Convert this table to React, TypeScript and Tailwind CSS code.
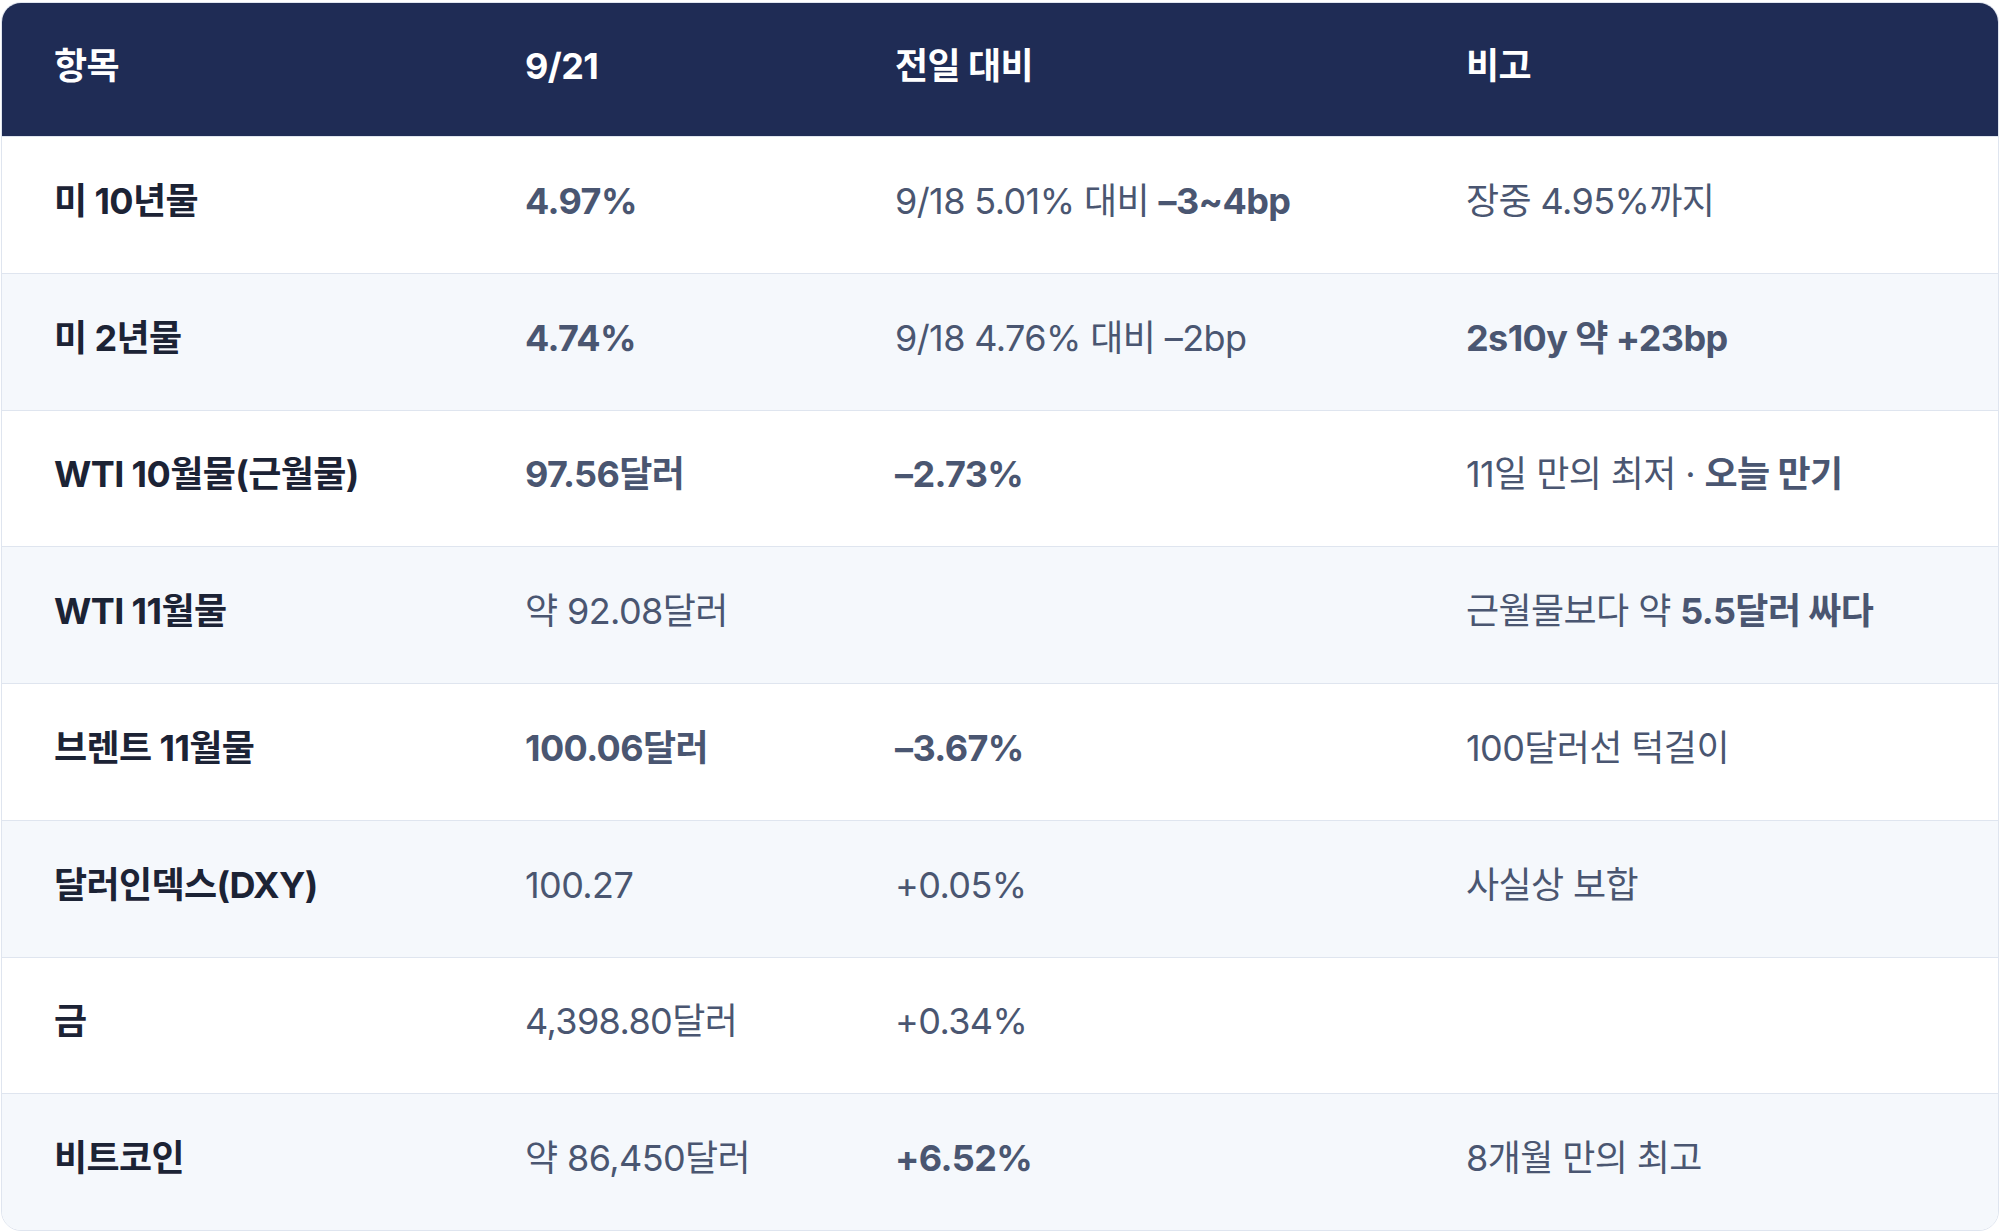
import React from "react";

type Seg = { t: string; b?: boolean };
type Row = { name: string; val: Seg[]; chg: Seg[]; note: Seg[] };

const rows: Row[] = [
  {
    name: "미 10년물",
    val: [{ t: "4.97%", b: true }],
    chg: [{ t: "9/18 5.01% 대비 " }, { t: "–3~4bp", b: true }],
    note: [{ t: "장중 4.95%까지" }],
  },
  {
    name: "미 2년물",
    val: [{ t: "4.74%", b: true }],
    chg: [{ t: "9/18 4.76% 대비 –2bp" }],
    note: [{ t: "2s10y 약 +23bp", b: true }],
  },
  {
    name: "WTI 10월물(근월물)",
    val: [{ t: "97.56달러", b: true }],
    chg: [{ t: "–2.73%", b: true }],
    note: [{ t: "11일 만의 최저 · " }, { t: "오늘 만기", b: true }],
  },
  {
    name: "WTI 11월물",
    val: [{ t: "약 92.08달러" }],
    chg: [],
    note: [{ t: "근월물보다 약 " }, { t: "5.5달러 싸다", b: true }],
  },
  {
    name: "브렌트 11월물",
    val: [{ t: "100.06달러", b: true }],
    chg: [{ t: "–3.67%", b: true }],
    note: [{ t: "100달러선 턱걸이" }],
  },
  {
    name: "달러인덱스(DXY)",
    val: [{ t: "100.27" }],
    chg: [{ t: "+0.05%" }],
    note: [{ t: "사실상 보합" }],
  },
  {
    name: "금",
    val: [{ t: "4,398.80달러" }],
    chg: [{ t: "+0.34%" }],
    note: [],
  },
  {
    name: "비트코인",
    val: [{ t: "약 86,450달러" }],
    chg: [{ t: "+6.52%", b: true }],
    note: [{ t: "8개월 만의 최고" }],
  },
];

function Segs({ segs }: { segs: Seg[] }) {
  return (
    <>
      {segs.map((s, i) => (
        <span key={i} className={s.b ? "font-bold" : "font-normal"}>
          {s.t}
        </span>
      ))}
    </>
  );
}

export default function App() {
  return (
    <div
      className="w-[2000px] h-[1232px] bg-white px-[1px] pt-[2px] pb-[1px]"
      style={{ fontFamily: 'Inter, "Noto Sans CJK KR", "Noto Sans", sans-serif' }}
    >
      <div className="h-full rounded-[20px] border border-[#dfe5ef] overflow-hidden flex flex-col">
        <div className="grid grid-cols-[469px_370px_571px_1fr] h-[133px] pb-[8px] bg-[#1f2c55] items-center text-white font-bold text-[36px] tracking-[-0.6px]">
          <div className="pl-[52px]">항목</div>
          <div className="pl-[54px]">9/21</div>
          <div className="pl-[54px]">전일 대비</div>
          <div className="pl-[54px]">비고</div>
        </div>
        {rows.map((r, i) => (
          <div
            key={i}
            className={`grid grid-cols-[469px_370px_571px_1fr] flex-1 pb-[8px] items-center border-t border-[#dfe5ef] text-[36px] tracking-[-0.6px] ${
              i % 2 === 1 ? "bg-[#f5f8fc]" : "bg-white"
            }`}
          >
            <div className="pl-[52px] font-bold text-[#1c2335]">{r.name}</div>
            <div className="pl-[54px] text-[#4a5671]">
              <Segs segs={r.val} />
            </div>
            <div className="pl-[54px] text-[#4a5671]">
              <Segs segs={r.chg} />
            </div>
            <div className="pl-[54px] text-[#4a5671]">
              <Segs segs={r.note} />
            </div>
          </div>
        ))}
      </div>
    </div>
  );
}
